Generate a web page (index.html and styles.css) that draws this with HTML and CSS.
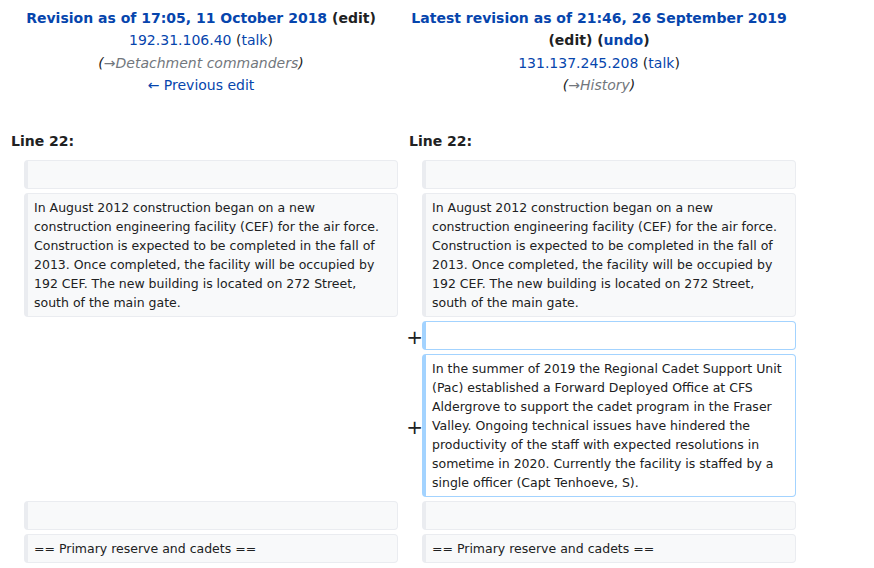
FILE: index.html
```html
<!DOCTYPE html>
<html lang="en">
<head>
<meta charset="utf-8">
<title>Diff</title>
<link rel="stylesheet" href="styles.css">
</head>
<body>
<table class="diff">
  <colgroup>
    <col class="col-marker"><col class="col-content"><col class="col-marker"><col class="col-content">
  </colgroup>
  <tr class="diff-title">
    <td colspan="2" class="title">
      <div><strong><a class="lnk" href="#">Revision as of 17:05, 11 October 2018</a> <span class="dark">(edit)</span></strong></div>
      <div><a class="lnk" href="#">192.31.106.40</a> (<a class="lnk" href="#">talk</a>)</div>
      <div class="comment">(<span class="auto">→Detachment commanders</span>)</div>
      <div><a class="lnk" href="#">← Previous edit</a></div>
    </td>
    <td colspan="2" class="title">
      <div><strong><a class="lnk" href="#">Latest revision as of 21:46, 26 September 2019</a> <span class="dark">(edit)</span> (<a class="lnk" href="#">undo</a>)</strong></div>
      <div><a class="lnk" href="#">131.137.245.208</a> (<a class="lnk" href="#">talk</a>)</div>
      <div class="comment">(<span class="auto">→History</span>)</div>
    </td>
  </tr>
  <tr>
    <td colspan="2" class="lineno">Line 22:</td>
    <td colspan="2" class="lineno">Line 22:</td>
  </tr>
  <tr>
    <td class="marker"></td><td class="context"><br></td>
    <td class="marker"></td><td class="context"><br></td>
  </tr>
  <tr>
    <td class="marker"></td><td class="context">In August 2012 construction began on a new construction engineering facility (CEF) for the air force. Construction is expected to be completed in the fall of 2013. Once completed, the facility will be occupied by 192 CEF. The new building is located on 272 Street, south of the main gate.</td>
    <td class="marker"></td><td class="context">In August 2012 construction began on a new construction engineering facility (CEF) for the air force. Construction is expected to be completed in the fall of 2013. Once completed, the facility will be occupied by 192 CEF. The new building is located on 272 Street, south of the main gate.</td>
  </tr>
  <tr>
    <td colspan="2" class="empty"></td>
    <td class="marker"><span class="plus">+</span></td><td class="added"><br></td>
  </tr>
  <tr>
    <td colspan="2" class="empty"></td>
    <td class="marker"><span class="plus">+</span></td><td class="added">In the summer of 2019 the Regional Cadet Support Unit (Pac) established a Forward Deployed Office at CFS Aldergrove to support the cadet program in the Fraser Valley. Ongoing technical issues have hindered the productivity of the staff with expected resolutions in sometime in 2020. Currently the facility is staffed by a single officer (Capt Tenhoeve, S).</td>
  </tr>
  <tr>
    <td class="marker"></td><td class="context"><br></td>
    <td class="marker"></td><td class="context"><br></td>
  </tr>
  <tr>
    <td class="marker"></td><td class="context">== Primary reserve and cadets ==</td>
    <td class="marker"></td><td class="context">== Primary reserve and cadets ==</td>
  </tr>
</table>
</body>
</html>
```
FILE: styles.css
```css
html, body {
  margin: 0;
  padding: 0;
  background: #ffffff;
}
body {
  font-family: "DejaVu Sans", sans-serif;
  font-size: 14px;
  color: #202122;
}
.diff {
  width: 800px;
  table-layout: fixed;
  border-spacing: 4px;
  border-collapse: separate;
}
.col-marker { width: 16px; }
.col-content { width: 374px; }
.title {
  text-align: center;
  vertical-align: top;
  line-height: 22.4px;
  padding: 3px 0 26px;
}
.lnk {
  color: #0645ad;
  text-decoration: none;
}
.dark { color: #202122; }
.comment {
  font-style: italic;
  color: #202122;
}
.auto { color: #72777d; }
.lineno {
  font-weight: bold;
  line-height: 22.4px;
  padding: 3px 0 4px 7px;
}
.marker {
  text-align: right;
  vertical-align: middle;
  font-size: 20px;
  line-height: 1.2;
  padding: 0;
  color: #202122;
  overflow: visible;
}
.plus {
  display: inline-block;
  margin-right: -5px;
  padding-top: 2px;
}
.context, .added {
  font-size: 12.5px;
  line-height: 19px;
  vertical-align: top;
  white-space: pre-wrap;
  word-wrap: break-word;
  border-style: solid;
  border-width: 1px 1px 1px 4px;
  border-radius: 4px;
  padding: 4px 6px;
}
.context {
  background: #f8f9fa;
  border-color: #eaecf0;
}
.added {
  background: #ffffff;
  border-color: #a3d3ff;
}
.empty { padding: 0; }
```
